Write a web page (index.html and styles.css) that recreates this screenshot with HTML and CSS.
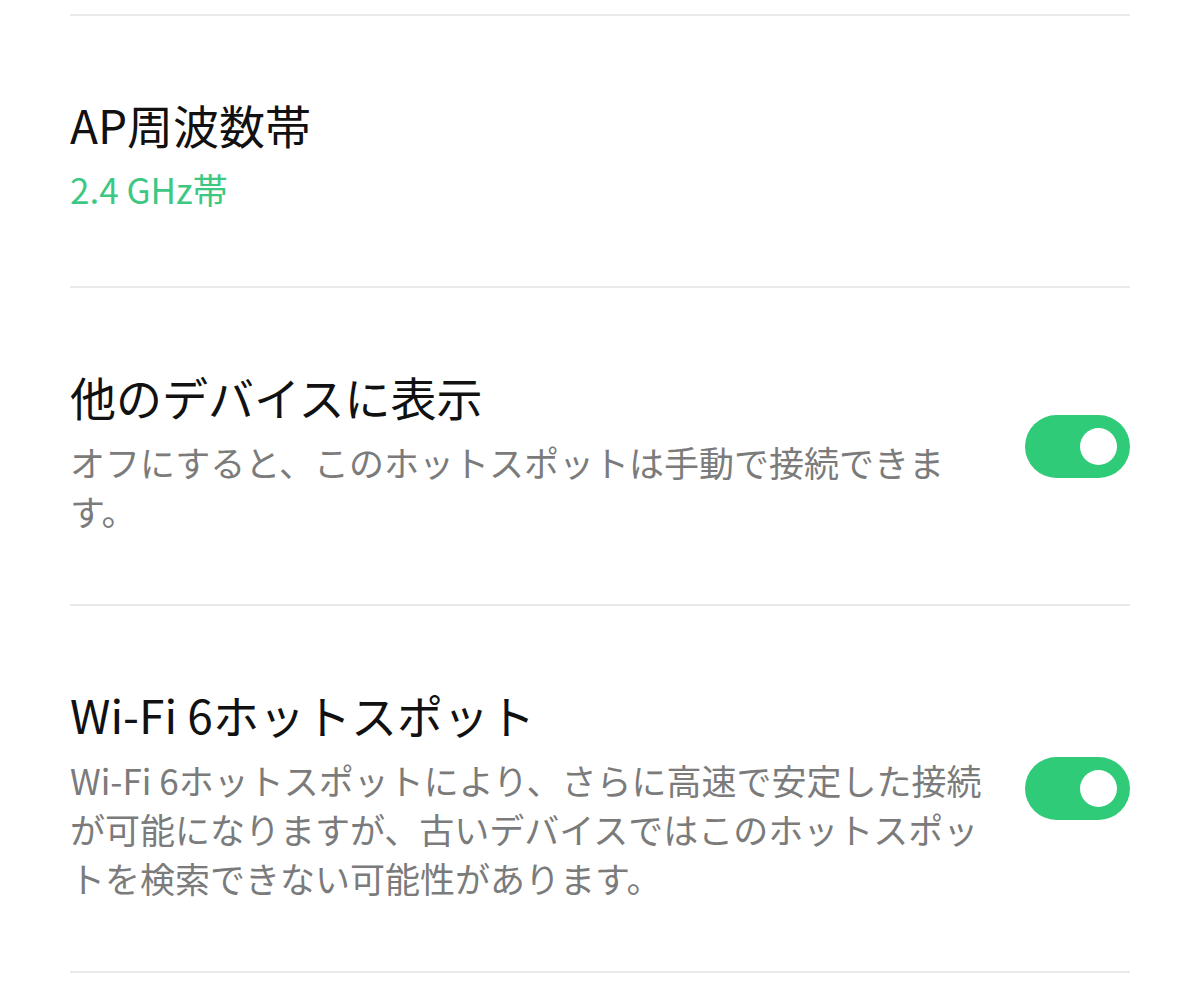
FILE: index.html
```html
<!DOCTYPE html>
<html lang="ja">
<head>
    <meta charset="UTF-8">
    <meta name="viewport" content="width=device-width, initial-scale=1.0">
    <title>ホットスポット設定</title>
    <link rel="stylesheet" href="styles.css">
</head>
<body>
    <div class="settings-list">
        <div class="setting-row">
            <div class="setting-text">
                <div class="setting-title">AP周波数帯</div>
                <div class="setting-value">2.4 GHz帯</div>
            </div>
        </div>
        <div class="setting-row">
            <div class="setting-text">
                <div class="setting-title">他のデバイスに表示</div>
                <div class="setting-desc">オフにすると、このホットスポットは手動で接続できます。</div>
            </div>
            <div class="switch on"><span class="knob"></span></div>
        </div>
        <div class="setting-row">
            <div class="setting-text">
                <div class="setting-title">Wi-Fi 6ホットスポット</div>
                <div class="setting-desc">Wi-Fi 6ホットスポットにより、さらに高速で安定した接続が可能になりますが、古いデバイスではこのホットスポットを検索できない可能性があります。</div>
            </div>
            <div class="switch on"><span class="knob"></span></div>
        </div>
    </div>
</body>
</html>
```

FILE: styles.css
```css
body {
    margin: 0;
    background-color: #ffffff;
    font-family: "Noto Sans CJK JP", "Noto Sans", sans-serif;
    color: #000000;
}
.settings-list {
    padding: 14px 70px 0 70px;
}
.setting-row {
    display: flex;
    align-items: center;
    gap: 30px;
    padding: 78px 0 69px 0;
    border-top: 2px solid #e9e9e9; /* light divider */
}
.setting-row:first-child {
    padding-bottom: 72px;
}
.setting-row:last-child {
    border-bottom: 2px solid #e9e9e9;
}
.setting-text {
    flex: 1;
    min-width: 0;
}
.setting-title {
    font-size: 46px;
    line-height: 60px;
    color: #111111;
}
.setting-value {
    margin-top: 10px;
    font-size: 35px;
    line-height: 50px;
    color: #3cc883; /* green value */
}
.setting-desc {
    margin-top: 11px;
    font-size: 35px;
    line-height: 49px;
    color: #7b7b7b;
    line-break: strict;
}
.switch {
    flex: none;
    width: 105px;
    height: 63px;
    margin-bottom: 9px;
    border-radius: 32px;
    background-color: #2fcb78;
    box-sizing: border-box;
    padding: 13px;
    display: flex;
    justify-content: flex-end;
    align-items: center;
}
.switch .knob {
    width: 37px;
    height: 37px;
    border-radius: 50%;
    background-color: #ffffff;
}
```
